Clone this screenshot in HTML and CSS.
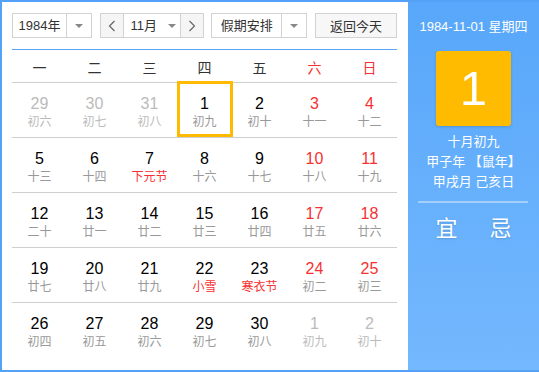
FILE: index.html
```html
<!DOCTYPE html>
<html lang="zh-CN">
<head>
  <meta charset="UTF-8">
  <title>万年历</title>
  <link rel="stylesheet" href="styles.css">
</head>
<body>
  <div class="calendar">
    <div class="main">
      <div class="toolbar">
        <div class="select year">
          <span class="select-text">1984年</span>
          <span class="select-arrow"><i class="caret"></i></span>
        </div>
        <div class="select month">
          <span class="nav">
            <svg width="8" height="12" viewBox="0 0 8 12"><path d="M6.5 1 L1.5 6 L6.5 11" fill="none" stroke="#666" stroke-width="1.2"/></svg>
          </span>
          <span class="month-text">11月<i class="caret"></i></span>
          <span class="nav">
            <svg width="8" height="12" viewBox="0 0 8 12"><path d="M1.5 1 L6.5 6 L1.5 11" fill="none" stroke="#666" stroke-width="1.2"/></svg>
          </span>
        </div>
        <div class="select holiday">
          <span class="select-text">假期安排</span>
          <span class="select-arrow"><i class="caret"></i></span>
        </div>
        <button class="today-btn">返回今天</button>
      </div>

      <div class="week">
        <span>一</span><span>二</span><span>三</span><span>四</span><span>五</span>
        <span class="red">六</span><span class="red">日</span>
      </div>

      <div class="days">
        <div class="row">
          <div class="day other"><b>29</b><small>初六</small></div>
          <div class="day other"><b>30</b><small>初七</small></div>
          <div class="day other"><b>31</b><small>初八</small></div>
          <div class="day today"><b>1</b><small>初九</small></div>
          <div class="day"><b>2</b><small>初十</small></div>
          <div class="day weekend"><b>3</b><small>十一</small></div>
          <div class="day weekend"><b>4</b><small>十二</small></div>
        </div>
        <div class="row">
          <div class="day"><b>5</b><small>十三</small></div>
          <div class="day"><b>6</b><small>十四</small></div>
          <div class="day"><b>7</b><small class="fest">下元节</small></div>
          <div class="day"><b>8</b><small>十六</small></div>
          <div class="day"><b>9</b><small>十七</small></div>
          <div class="day weekend"><b>10</b><small>十八</small></div>
          <div class="day weekend"><b>11</b><small>十九</small></div>
        </div>
        <div class="row">
          <div class="day"><b>12</b><small>二十</small></div>
          <div class="day"><b>13</b><small>廿一</small></div>
          <div class="day"><b>14</b><small>廿二</small></div>
          <div class="day"><b>15</b><small>廿三</small></div>
          <div class="day"><b>16</b><small>廿四</small></div>
          <div class="day weekend"><b>17</b><small>廿五</small></div>
          <div class="day weekend"><b>18</b><small>廿六</small></div>
        </div>
        <div class="row">
          <div class="day"><b>19</b><small>廿七</small></div>
          <div class="day"><b>20</b><small>廿八</small></div>
          <div class="day"><b>21</b><small>廿九</small></div>
          <div class="day"><b>22</b><small class="fest">小雪</small></div>
          <div class="day"><b>23</b><small class="fest">寒衣节</small></div>
          <div class="day weekend"><b>24</b><small>初二</small></div>
          <div class="day weekend"><b>25</b><small>初三</small></div>
        </div>
        <div class="row">
          <div class="day"><b>26</b><small>初四</small></div>
          <div class="day"><b>27</b><small>初五</small></div>
          <div class="day"><b>28</b><small>初六</small></div>
          <div class="day"><b>29</b><small>初七</small></div>
          <div class="day"><b>30</b><small>初八</small></div>
          <div class="day other"><b>1</b><small>初九</small></div>
          <div class="day other"><b>2</b><small>初十</small></div>
        </div>
      </div>
    </div>

    <div class="side">
      <p class="side-date">1984-11-01 星期四</p>
      <div class="side-day">1</div>
      <p class="side-lunar">十月初九</p>
      <p class="side-lunar">甲子年 【鼠年】</p>
      <p class="side-lunar">甲戌月 己亥日</p>
      <div class="side-line"></div>
      <div class="side-yiji">
        <span>宜</span>
        <span>忌</span>
      </div>
    </div>
  </div>
</body>
</html>
```

FILE: styles.css
```css
* {
  margin: 0;
  padding: 0;
  box-sizing: border-box;
}
body {
  font-family: "Liberation Sans", "Noto Sans CJK SC", sans-serif;
  background: #fff;
}
.calendar {
  display: flex;
  width: 539px;
  height: 372px;
  border: 2px solid #54a2f8;
  border-right: none;
}
.main {
  width: 406px;
  padding: 11px 11px 0 10px;
  background: #fff;
}

/* toolbar */
.toolbar {
  display: flex;
  justify-content: space-between;
  height: 25px;
  margin-bottom: 11px;
}
.select {
  display: flex;
  height: 25px;
  border: 1px solid #d2d2d2;
  font-size: 13px;
  line-height: 23px;
  color: #333;
}
.year {
  width: 80px;
}
.holiday {
  width: 96px;
}
.select-text {
  flex: 1;
  text-align: center;
}
.select-arrow {
  width: 25px;
  border-left: 1px solid #d2d2d2;
  display: flex;
  align-items: center;
  justify-content: center;
}
.caret {
  display: inline-block;
  width: 0;
  height: 0;
  border-left: 4px solid transparent;
  border-right: 4px solid transparent;
  border-top: 4px solid #888;
}
.month {
  width: 104px;
}
.nav {
  width: 23px;
  background: #f5f5f5;
  display: flex;
  align-items: center;
  justify-content: center;
}
.nav:first-child {
  border-right: 1px solid #d2d2d2;
}
.nav:last-child {
  border-left: 1px solid #d2d2d2;
}
.month-text {
  flex: 1;
  display: flex;
  align-items: center;
  justify-content: center;
  gap: 11px;
  padding-left: 3px;
}
.today-btn {
  width: 82px;
  height: 25px;
  border: 1px solid #d2d2d2;
  background: #f7f7f7;
  font-family: inherit;
  font-size: 13px;
  color: #333;
}

/* week header */
.week {
  display: grid;
  grid-template-columns: repeat(7, 1fr);
  border-top: 1px solid #5ba6f8;
  border-bottom: 1px solid #cfcfcf;
  padding-top: 3px;
  height: 34px;
  font-size: 14px;
  line-height: 30px;
  text-align: center;
  color: #333;
}
.week .red {
  color: #f73131;
}

/* days */
.row {
  display: grid;
  grid-template-columns: repeat(7, 1fr);
  height: 55px;
  border-bottom: 1px solid #cfcfcf;
}
.row:last-child {
  border-bottom: none;
}
.day {
  position: relative;
  display: flex;
  flex-direction: column;
  align-items: center;
  padding-top: 12px;
}
.day b {
  font-weight: normal;
  font-size: 16px;
  line-height: 18px;
  color: #000;
}
.day small {
  font-size: 12px;
  line-height: 18px;
  color: #999;
}
.day.weekend b {
  color: #f73131;
}
.day .fest {
  color: #f73131;
}
.day.other b,
.day.other small {
  color: #bbb;
}
.day.today::after {
  content: "";
  position: absolute;
  top: -2px;
  left: 0;
  right: -1px;
  bottom: 0;
  border: 3px solid #ffbb00;
}

/* side panel */
.side {
  flex: 1;
  background: linear-gradient(to bottom, #58a7fa, #74b8fe);
  color: #fff;
  text-align: center;
  padding-top: 15px;
}
.side-date {
  font-size: 13px;
  line-height: 20px;
}
.side-day {
  width: 75px;
  height: 75px;
  margin: 14px auto 6px;
  background: #ffbb00;
  border-radius: 3px;
  box-shadow: 0 1px 3px rgba(0, 0, 0, 0.15);
  font-size: 49px;
  line-height: 75px;
  font-family: "Liberation Sans", sans-serif;
}
.side-lunar {
  font-size: 13px;
  line-height: 20px;
}
.side-line {
  height: 2px;
  margin: 9px 11px 0 10px;
  background: rgba(255, 255, 255, 0.4);
}
.side-yiji {
  display: flex;
  justify-content: center;
  gap: 32px;
  padding-top: 11px;
  font-size: 22px;
  line-height: 30px;
  text-shadow: 0 1px 2px rgba(0, 0, 0, 0.15);
}
```
